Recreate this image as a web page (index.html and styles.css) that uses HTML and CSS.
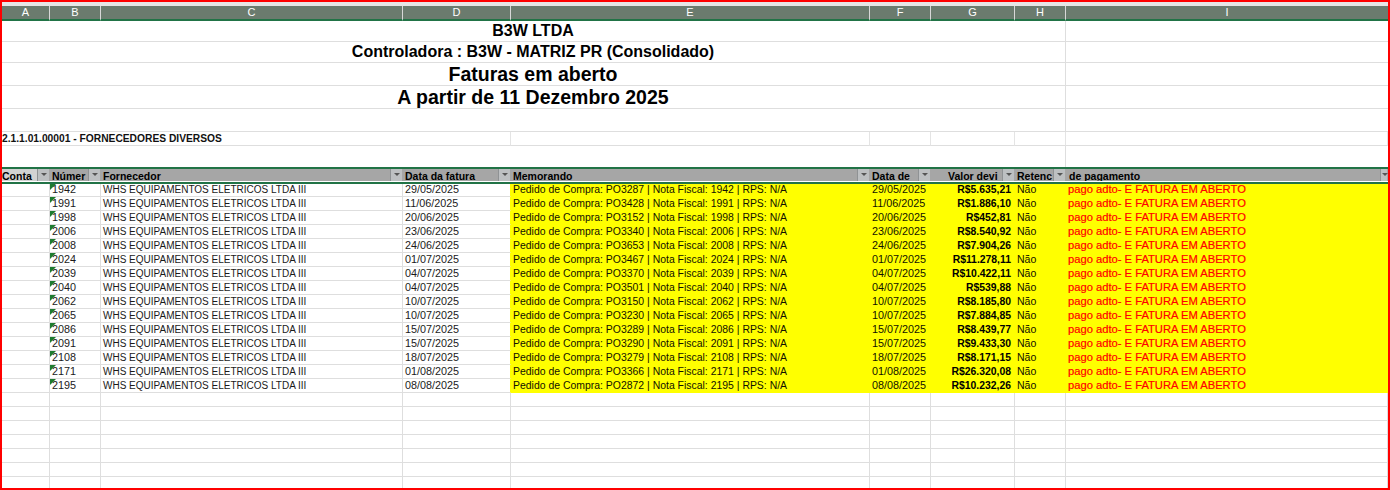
FILE: index.html
```html
<!DOCTYPE html>
<html lang="pt-BR">
<head>
<meta charset="utf-8">
<title>Faturas em aberto</title>
<link rel="stylesheet" href="styles.css">
</head>
<body>
<div class="sheet">
<div class="strip"></div>
<table class="grid">
<colgroup>
<col class="ca"><col class="cb"><col class="cc"><col class="cd"><col class="ce"><col class="cf"><col class="cg"><col class="ch"><col class="ci">
</colgroup>
<thead>
<tr class="letters"><th>A</th><th>B</th><th>C</th><th>D</th><th>E</th><th>F</th><th>G</th><th>H</th><th>I</th></tr>
</thead>
<tbody>
<tr class="t1"><td colspan="8" class="title s1">B3W LTDA</td><td></td></tr>
<tr class="t2"><td colspan="8" class="title s1">Controladora : B3W - MATRIZ PR (Consolidado)</td><td></td></tr>
<tr class="t3"><td colspan="8" class="title s2">Faturas em aberto</td><td></td></tr>
<tr class="t3"><td colspan="8" class="title s2">A partir de 11 Dezembro 2025</td><td></td></tr>
<tr class="t3"><td colspan="8" class="title"></td><td></td></tr>
<tr class="acct"><td colspan="4" class="acct-name">2.1.1.01.00001 - FORNECEDORES DIVERSOS</td><td></td><td></td><td></td><td></td><td></td></tr>
<tr class="gap"><td colspan="8" class="title"></td><td></td></tr>
<tr class="heads">
<th class="first"><span class="hd"><span class="lbl">Conta</span><i class="fb"></i></span></th>
<th><span class="hd"><span class="lbl">Númer</span><i class="fb"></i></span></th>
<th><span class="hd"><span class="lbl">Fornecedor</span><i class="fb"></i></span></th>
<th><span class="hd"><span class="lbl">Data da fatura</span><i class="fb"></i></span></th>
<th><span class="hd"><span class="lbl">Memorando</span><i class="fb"></i></span></th>
<th><span class="hd"><span class="lbl">Data de</span><i class="fb"></i></span></th>
<th><span class="hd"><span class="lbl pushed">Valor devi</span><i class="fb"></i></span></th>
<th><span class="hd"><span class="lbl">Retenc</span><i class="fb"></i></span></th>
<th><span class="hd"><span class="lbl inset">de pagamento</span><i class="fb end"></i></span></th>
</tr>
<tr class="line"><td colspan="9"></td></tr>
</tbody>
<tbody id="rows" class="data-rows"></tbody>
<tbody id="blank"></tbody>
</table>
</div>
<script src="data.js"></script>
</body>
</html>
```
FILE: data.js
```js
var data = [
["1942","29/05/2025","PO3287","29/05/2025","R$5.635,21"],
["1991","11/06/2025","PO3428","11/06/2025","R$1.886,10"],
["1998","20/06/2025","PO3152","20/06/2025","R$452,81"],
["2006","23/06/2025","PO3340","23/06/2025","R$8.540,92"],
["2008","24/06/2025","PO3653","24/06/2025","R$7.904,26"],
["2024","01/07/2025","PO3467","01/07/2025","R$11.278,11"],
["2039","04/07/2025","PO3370","04/07/2025","R$10.422,11"],
["2040","04/07/2025","PO3501","04/07/2025","R$539,88"],
["2062","10/07/2025","PO3150","10/07/2025","R$8.185,80"],
["2065","10/07/2025","PO3230","10/07/2025","R$7.884,85"],
["2086","15/07/2025","PO3289","15/07/2025","R$8.439,77"],
["2091","15/07/2025","PO3290","15/07/2025","R$9.433,30"],
["2108","18/07/2025","PO3279","18/07/2025","R$8.171,15"],
["2171","01/08/2025","PO3366","01/08/2025","R$26.320,08"],
["2195","08/08/2025","PO2872","08/08/2025","R$10.232,26"]
];
var html = "";
data.forEach(function (d) {
  html += '<tr class="row"><td></td><td class="num">' + d[0] + '</td>' +
    '<td>WHS EQUIPAMENTOS ELETRICOS LTDA III</td><td class="date before-hl">' + d[1] + '</td>' +
    '<td class="hl memo">Pedido de Compra: ' + d[2] + ' | Nota Fiscal: ' + d[0] + ' | RPS: N/A</td>' +
    '<td class="hl date">' + d[3] + '</td><td class="hl val">' + d[4] + '</td><td class="hl ret">Não</td>' +
    '<td class="hl note">pago adto- E FATURA EM ABERTO</td></tr>';
});
document.getElementById("rows").innerHTML = html;
var blank = "";
for (var i = 0; i < 7; i++) {
  blank += '<tr class="row"><td></td><td></td><td></td><td></td><td></td><td></td><td></td><td></td><td></td></tr>';
}
document.getElementById("blank").innerHTML = blank;
```
FILE: styles.css
```css
html, body { margin: 0; padding: 0; background: #fff; }
body { width: 1390px; height: 490px; overflow: hidden; }
.sheet {
  box-sizing: border-box;
  width: 1390px;
  height: 490px;
  border: 2px solid #ff0000;
  overflow: hidden;
  font-family: "Liberation Sans", Arial, sans-serif;
  color: #000;
}
.strip { height: 4px; background: #e6e6e6; }
.grid { border-collapse: separate; border-spacing: 0; table-layout: fixed; width: 1386px; }
.ca { width: 48px; } .cb { width: 51px; } .cc { width: 302px; } .cd { width: 108px; }
.ce { width: 359px; } .cf { width: 61px; } .cg { width: 84px; } .ch { width: 51px; } .ci { width: 322px; }
.grid td, .grid th { padding: 0; overflow: hidden; white-space: nowrap; box-sizing: border-box; }
.letters th {
  height: 15px;
  background: #6b7b6e;
  color: #fff;
  font-weight: 400;
  font-size: 11px;
  line-height: 13px;
  border-right: 1px solid #d8d8d8;
  border-bottom: 2px solid #217346;
}
.letters th:last-child { border-right: 0; }
.grid tbody td { border-bottom: 1px solid #dedede; }
.t1 td { height: 21px; }
.t2 td { height: 21px; }
.t3 td { height: 23px; }
.acct td { height: 14px; border-right: 1px solid #e4e4e4; }
.gap td { height: 21px; border-bottom: 0 !important; }
.title { text-align: center; font-weight: 700; border-right: 1px solid #dedede; padding-right: 1px !important; line-height: 20px; }
.s1 { font-size: 16px; }
.s2 { font-size: 19.5px; }
.acct-name { font-size: 10.25px; font-weight: 700; color: #111; vertical-align: top; line-height: 13px; }
.heads th {
  height: 14px;
  background: #a6a6a6;
  border-top: 2px solid #217346;
  font-size: 10.5px;
  line-height: 14px;
  text-align: left;
}
.heads th.first { background: linear-gradient(to right, #d2d2d2 35px, #a6a6a6 35px); }
.hd { display: flex; align-items: stretch; height: 12px; padding-right: 1px; }
.lbl { flex: 1; min-width: 0; padding-left: 2px; }
.first .lbl { padding-left: 0; }
.lbl.pushed { padding-left: 17px; }
.lbl.inset { padding-left: 3px; }
.fb {
  flex: none;
  position: relative;
  width: 12px;
  background: #bdc0c2;
  border-left: 1px solid #8f9294;
  box-sizing: border-box;
}
.fb::after {
  content: "";
  position: absolute;
  left: 3px;
  top: 4px;
  border-left: 3px solid transparent;
  border-right: 3px solid transparent;
  border-top: 3px solid #555;
}
.fb.end { width: 7px; }
.fb.end::after { left: 1px; }
.line td { height: 3px; background: #217346; border-top: 1px solid #fff; border-bottom: 0 !important; }
.row td {
  height: 14px;
  font-size: 10px;
  line-height: 12px;
  padding-left: 2px;
  padding-top: 1px;
  color: #1a1a1a;
  border-right: 1px solid #dedede;
  vertical-align: top;
}
.data-rows .row:first-child td { height: 13px; line-height: 10px; }
.row td.before-hl { border-right-color: #ffff00; }
.row td.hl { background: #ffff00; border-color: #ffff00; color: #111100; }
.row td.date { font-size: 10.8px; padding-top: 0; }
.row td.memo { font-size: 10.45px; }
.row td.ret { font-size: 10.5px; padding-top: 0; }
.row td.num { position: relative; padding-left: 2px; padding-top: 0; font-size: 10.8px; }
.num::before {
  content: "";
  position: absolute;
  left: 0;
  top: 0;
  border-top: 6px solid #1e7b30;
  border-right: 6px solid transparent;
}
.row td.val { text-align: right; font-weight: 700; font-size: 10.4px; padding-right: 3px; color: #000; }
.row td.note { color: #ff0000; font-size: 11.2px; padding-top: 0; -webkit-text-stroke: 0.2px #ff0000; }
```
